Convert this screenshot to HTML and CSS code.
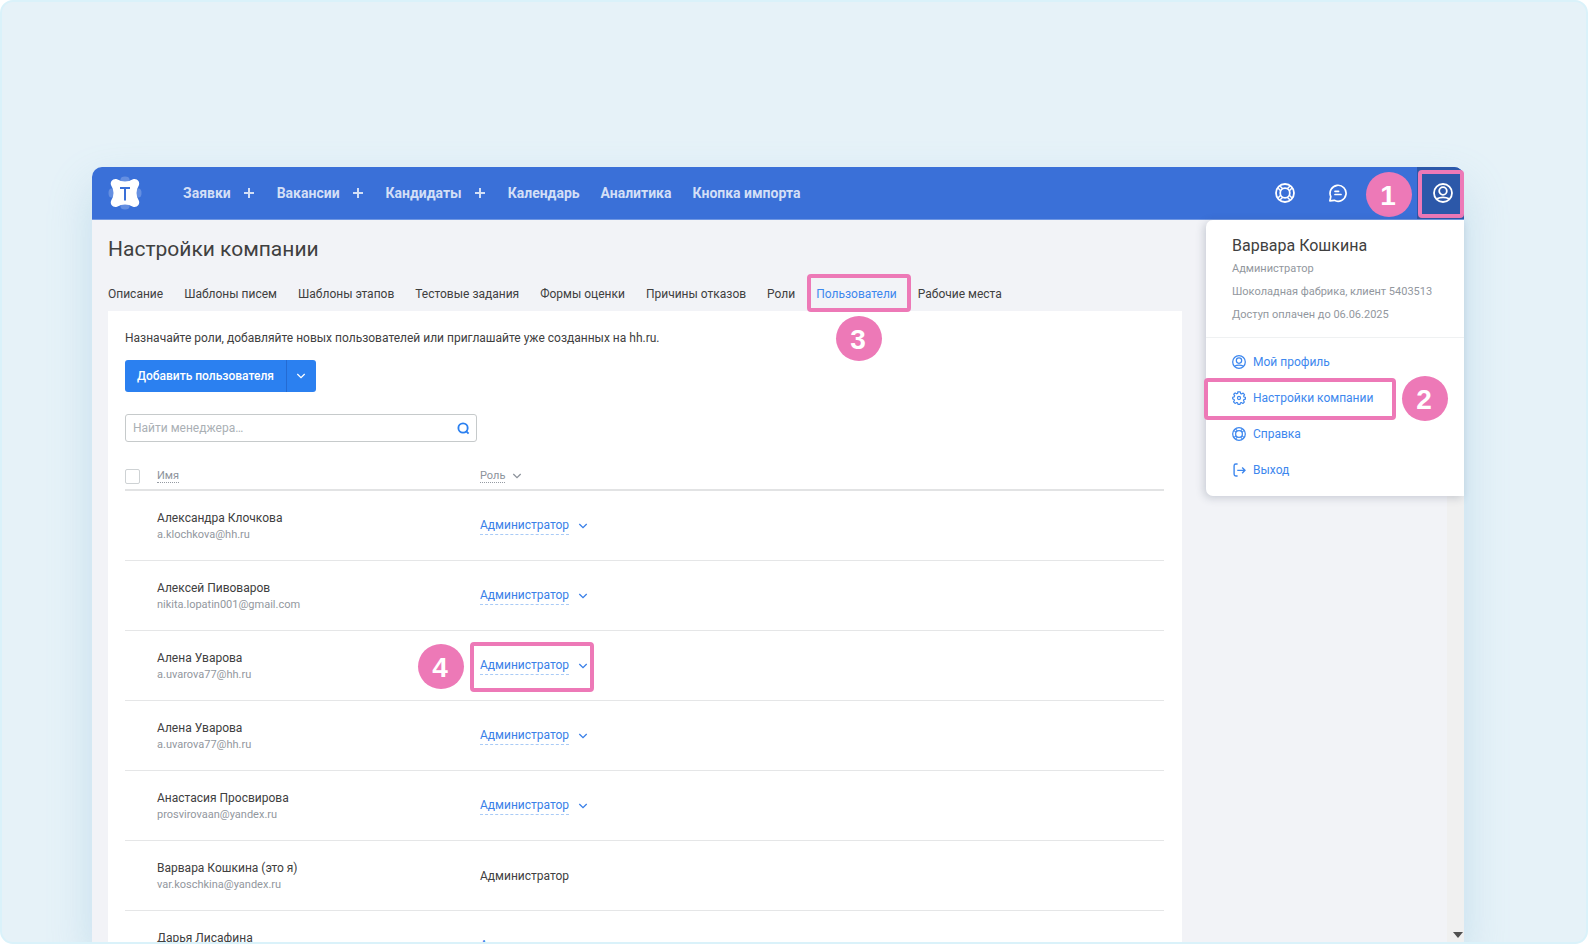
FILE: index.html
```html
<!DOCTYPE html>
<html lang="ru">
<head>
<meta charset="utf-8">
<title>Настройки компании</title>
<link rel="stylesheet" href="styles.css">
</head>
<body>
<svg class="sprite" aria-hidden="true">
  <symbol id="buoy" viewBox="0 0 20 20"><g fill="none" stroke="currentColor" stroke-width="1.8"><circle cx="10" cy="10" r="9"/><circle cx="10" cy="10" r="4.800"/><path stroke-width="1.5" d="M5.2 3.2 7.700 5.700M3.2 5.200 5.700 7.700M12.300 5.700l2.500-2.500M14.300 7.700 16.800 5.200M7.700 14.300l-2.500 2.500M5.700 12.300 3.200 14.800M12.300 14.300l2.500 2.500M14.300 12.300 16.800 14.800"/></g></symbol>
  <symbol id="user" viewBox="0 0 20 20"><g fill="none" stroke="currentColor" stroke-width="1.8"><circle cx="10" cy="10" r="9"/><circle cx="10" cy="8" r="3.800"/><path d="M4 15.800c1.800-1 3.600-1.400 6-1.400s4.200.4 6 1.400"/></g></symbol>
  <symbol id="chat" viewBox="0 0 20 20"><g fill="none" stroke="currentColor" stroke-width="1.7"><path stroke-linejoin="round" d="M1.900 17.800 2.800 13.600A8 8 0 1 1 6.300 17.300Z"/><path stroke-linecap="round" d="M7 8.300h3.600M7 11.500h6"/></g></symbol>
  <symbol id="gear" viewBox="0 0 20 20"><g fill="none" stroke="currentColor" stroke-width="1.7" stroke-linejoin="round"><path d="M8.200 1.200h3.600l.6 2.500 1.300.6 2.200-1.400 2 2.300-1.300 2.100.5 1.300 2.100.6v2.400l-2.200.7-.6 1.300 1.200 2.200-2.100 2-2.200-1.300-1.200.5-.7 2.200H8.600L8 17l-1.400-.6-2.200 1.300-2.200-2.200 1.300-2.200-.5-1.200-2-.6V9l2.200-.6.6-1.500-1.300-2.200 2-2 2.200 1.300 1.400-.6z"/><circle cx="10" cy="10" r="2.200"/></g></symbol>
  <symbol id="exit" viewBox="0 0 20 20"><path fill="none" stroke="currentColor" stroke-width="2" d="M8 1.500H5.500Q3 1.500 3 4v12q0 2.500 2.500 2.500H8M7.500 10.500h11M14.500 6.500l4 4-4 4"/></symbol>
  <symbol id="chevron" viewBox="0 0 10 6"><path fill="none" stroke="currentColor" stroke-width="1.300" d="M1.300 1 5 4.700 8.700 1"/></symbol>
</svg>
<main class="frame">
  <div class="window">
    <header class="topbar">
      <a class="logo" href="#" aria-label="Главная">
        <svg viewBox="0 0 34 34"><g fill="#658fe1"><ellipse cx="17" cy="3.500" rx="4.500" ry="3"/><ellipse cx="17" cy="30.500" rx="4.500" ry="3"/><ellipse cx="3.500" cy="17" rx="3" ry="4.500"/><ellipse cx="30.500" cy="17" rx="3" ry="4.500"/></g><path fill="#fff" d="M9 3.200Q13 5.600 17 5.600T25 3.200C29 2 32.500 6 30.800 9.500Q28.500 13 28.500 17T30.800 24.500C32.500 28 29 32 25 30.800Q21 28.400 17 28.400T9 30.800C5 32 1.500 28 3.200 24.500Q5.500 21 5.500 17T3.200 9.500C1.500 6 5 2 9 3.200Z"/><path fill="none" stroke="#3a70d8" stroke-width="2" d="M12 12h10M17 12v12.500"/></svg>
      </a>
      <nav class="nav">
        <a href="#">Заявки</a><button class="plus" aria-label="Добавить заявку"></button>
        <a href="#">Вакансии</a><button class="plus" aria-label="Добавить вакансию"></button>
        <a href="#">Кандидаты</a><button class="plus" aria-label="Добавить кандидата"></button>
        <a href="#">Календарь</a><a href="#">Аналитика</a><a href="#">Кнопка импорта</a>
      </nav>
      <div class="tools">
        <button class="tool" aria-label="Справка"><svg><use href="#buoy"/></svg></button>
        <button class="tool" aria-label="Сообщения"><svg><use href="#chat"/></svg></button>
        <span class="badge badge-1">1</span>
        <button class="tool tool-user" aria-label="Профиль"><svg><use href="#user"/></svg><span class="mark mark-user"></span></button>
      </div>
    </header>
    <div class="body">
      <section class="content">
        <h1>Настройки компании</h1>
        <nav class="tabs">
          <a href="#">Описание</a><a href="#">Шаблоны писем</a><a href="#">Шаблоны этапов</a><a href="#">Тестовые задания</a><a href="#">Формы оценки</a><a href="#">Причины отказов</a><a href="#">Роли</a><a class="active" href="#">Пользователи<span class="mark mark-tab"></span></a><a href="#">Рабочие места</a>
        </nav>
        <div class="panel">
          <p>Назначайте роли, добавляйте новых пользователей или приглашайте уже созданных на hh.ru.</p>
          <span class="badge badge-3">3</span>
          <div class="split"><button class="add">Добавить пользователя</button><button class="more" aria-label="Ещё"><svg class="chev"><use href="#chevron"/></svg></button></div>
          <label class="search"><input type="text" placeholder="Найти менеджера…" aria-label="Найти менеджера"><svg viewBox="0 0 14 14"><g fill="none" stroke="#2b80f0" stroke-width="2"><circle cx="6.500" cy="6.500" r="5"/><path d="M9.500 9.500l3 3"/></g></svg></label>
          <table>
            <thead><tr><th class="pick"><input type="checkbox" aria-label="Выбрать всех"></th><th class="who"><span class="sort">Имя</span></th><th><span class="sort">Роль</span><svg class="chev"><use href="#chevron"/></svg></th></tr></thead>
            <tbody>
              <tr><td></td><td><b>Александра Клочкова</b><small>a.klochkova@hh.ru</small></td><td><button class="role"><span>Администратор</span><svg class="chev"><use href="#chevron"/></svg></button></td></tr>
              <tr><td></td><td><b>Алексей Пивоваров</b><small>nikita.lopatin001@gmail.com</small></td><td><button class="role"><span>Администратор</span><svg class="chev"><use href="#chevron"/></svg></button></td></tr>
              <tr><td></td><td><b>Алена Уварова</b><small>a.uvarova77@hh.ru</small></td><td><button class="role"><span>Администратор</span><svg class="chev"><use href="#chevron"/></svg><i class="mark mark-role"></i><i class="badge badge-4">4</i></button></td></tr>
              <tr><td></td><td><b>Алена Уварова</b><small>a.uvarova77@hh.ru</small></td><td><button class="role"><span>Администратор</span><svg class="chev"><use href="#chevron"/></svg></button></td></tr>
              <tr><td></td><td><b>Анастасия Просвирова</b><small>prosvirovaan@yandex.ru</small></td><td><button class="role"><span>Администратор</span><svg class="chev"><use href="#chevron"/></svg></button></td></tr>
              <tr><td></td><td><b>Варвара Кошкина (это я)</b><small>var.koschkina@yandex.ru</small></td><td>Администратор</td></tr>
              <tr><td></td><td><b>Дарья Лисафина</b><small>d.lisafina@hh.ru</small></td><td><button class="role"><span>Администратор</span><svg class="chev"><use href="#chevron"/></svg></button></td></tr>
            </tbody>
          </table>
        </div>
      </section>
      <div class="scrollbar"><svg viewBox="0 0 10 6"><path fill="#505050" d="M0 0h10L5 6z"/></svg></div>
      <aside class="menu">
        <div class="account">
          <h2>Варвара Кошкина</h2>
          <p>Администратор</p>
          <p>Шоколадная фабрика, клиент 5403513</p>
          <p>Доступ оплачен до 06.06.2025</p>
        </div>
        <nav class="links">
          <a href="#"><svg><use href="#user"/></svg>Мой профиль</a>
          <a href="#"><svg><use href="#gear"/></svg>Настройки компании</a>
          <a href="#"><svg><use href="#buoy"/></svg>Справка</a>
          <a href="#"><svg><use href="#exit"/></svg>Выход</a>
        </nav>
        <span class="mark mark-menu"></span><span class="badge badge-2">2</span>
      </aside>
    </div>
  </div>
</main>
</body>
</html>
```
FILE: styles.css
```css
* { box-sizing: border-box; }
body { margin: 0; background: #fff; font: 12px/16px Roboto, "Liberation Sans", sans-serif; color: #404040; }
a { color: inherit; text-decoration: none; }
button { border: 0; padding: 0; background: none; font: inherit; color: inherit; }
svg { display: block; flex: none; }
.sprite { position: absolute; width: 0; height: 0; }

.frame { display: flex; height: 100vh; padding: 165px 122px 0 90px; overflow: hidden; border: 2px solid #daf2fa; border-radius: 13px; background: #e6f2f8; }
.window { flex: 1; display: flex; flex-direction: column; min-width: 0; border-radius: 10px 10px 0 0; background: #f2f3f7; box-shadow: 0 20px 44px rgba(120, 180, 212, .3); }

.topbar { display: flex; flex: none; align-items: center; height: 53px; padding-left: 16px; border-bottom: 1px solid #7097e2; border-radius: 10px 10px 0 0; background: #3a70d8; color: #d3dff6; }
.logo { width: 34px; margin-right: 41px; }
.nav { display: flex; align-items: center; font-size: 14px; font-weight: 700; }
.nav a { margin-right: 21px; }
.nav a:has(+ .plus) { margin-right: 13px; }
.plus { width: 10px; height: 10px; margin-right: 23px; background: linear-gradient(currentColor, currentColor) center / 10px 2px no-repeat, linear-gradient(currentColor, currentColor) center / 2px 10px no-repeat; }
.tools { position: relative; display: flex; align-self: stretch; margin-left: auto; color: #fff; }
.tool { display: grid; place-items: center; width: 53px; }
.tool svg { width: 20px; height: 20px; }
.tool-user { position: relative; width: 47px; margin-left: 53px; padding-left: 4px; border-top-right-radius: 10px; background: #2c58a9; }

.badge { position: absolute; display: grid; place-items: center; width: 46px; height: 45px; padding: 3px 2px 0 0; border-radius: 50%; background: #ed79b7; color: #fff; font: 700 28px/1 "Liberation Sans", sans-serif; }
.mark { position: absolute; border: 4px solid #ed79b7; border-radius: 4px; }
.badge-1 { right: 52px; top: 5px; }
.badge-2 { left: 196px; top: 156px; }
.badge-3 { left: 728px; top: 5px; }
.badge-4 { right: 124px; top: -13px; }
.mark-user { inset: 3px 0 1px 1px; }
.mark-tab { inset: -12px -14px -10px -9px; z-index: 1; }
.mark-role { inset: -15px -6px -17px -10px; }
.mark-menu { left: -2px; top: 158px; width: 192px; height: 42px; }

.body { position: relative; flex: 1; display: flex; min-height: 0; }
.content { flex: 1; display: flex; flex-direction: column; padding: 15px 265px 0 16px; min-width: 0; }
h1 { margin: 0; font-size: 21px; line-height: 28px; font-weight: 400; }
.tabs { display: flex; gap: 21px; margin-top: 23px; padding-bottom: 9px; white-space: nowrap; }
.tabs .active { position: relative; color: #3d87ee; }
.panel { position: relative; flex: 1; min-height: 0; padding: 19px 18px 0 17px; background: #fff; }
.panel p { margin: 0 0 14px; }
.split { display: flex; width: max-content; border-radius: 3px; background: #2b80f0; color: #fff; }
.add { height: 32px; padding: 0 12px; font-weight: 500; }
.more { display: grid; place-items: center; width: 30px; border-left: 1px solid #246bd3; }
.chev { width: 10px; height: 6px; }
.search { display: flex; align-items: center; width: 352px; height: 28px; margin: 22px 0 21px; padding: 0 6px 0 7px; border: 1px solid #c6cacb; border-radius: 3px; }
.search input { flex: 1; min-width: 0; padding: 0; border: 0; outline: 0; background: none; font: inherit; }
.search input::placeholder { color: #aab0b5; }
.search svg { width: 13px; height: 13px; }

table { width: 100%; border-collapse: collapse; }
th { height: 26px; padding: 5px 0; border-bottom: 2px solid #e2e3e4; font-size: 11px; font-weight: 400; text-align: left; color: #8d939b; }
th .chev { display: inline-block; margin-left: 7px; }
.pick { width: 32px; }
.who { width: 323px; }
.pick input { display: block; appearance: none; width: 15px; height: 15px; margin: 0; border: 1px solid #ced2d4; border-radius: 2px; background: #fff; }
.sort { border-bottom: 1px dotted #959ba3; }
td { height: 70px; padding: 2px 0 0; border-bottom: 1px solid #e5e6e7; }
td b { display: block; font-weight: 400; }
small { display: block; margin-top: 1px; font-size: 11px; color: #92979e; }
.role { position: relative; display: flex; align-items: center; gap: 9px; color: #397fe8; }
.role span { line-height: 17px; border-bottom: 1px dashed #aacbf6; }

.scrollbar { display: flex; align-items: flex-end; justify-content: flex-end; width: 17px; padding: 0 1px 4px 0; background: #f0f0f0; }
.scrollbar svg { width: 10px; height: 6px; }
.menu { position: absolute; top: 0; right: 0; width: 258px; border-radius: 7px 0 0 7px; background: #fff; box-shadow: -2px 2px 8px rgba(50, 65, 90, .22); }
.account { padding: 16px 26px 14px; border-bottom: 1px solid #eff1f2; }
h2 { margin: 0 0 5px; font-size: 16px; line-height: 20px; font-weight: 400; }
.account p { margin: 0 0 7px; font-size: 11px; color: #92979e; }
.account p:last-child { margin: 0; }
.links { display: grid; gap: 20px; padding: 16px 26px 18px; color: #3d87ee; }
.links a { display: flex; align-items: center; gap: 7px; }
.links svg { width: 14px; height: 14px; }
```
